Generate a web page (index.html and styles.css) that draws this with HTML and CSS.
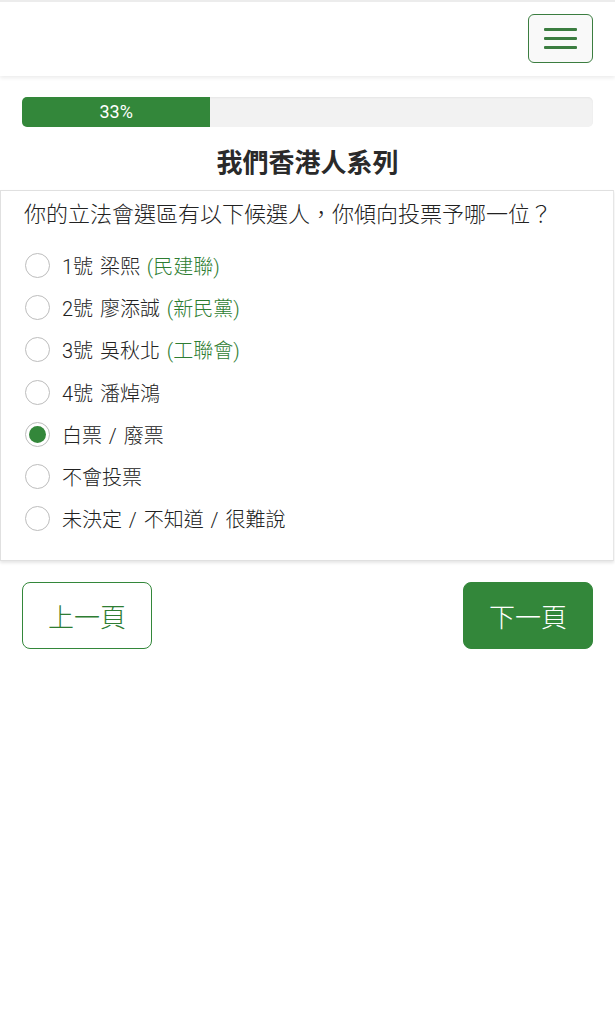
FILE: index.html
```html
<!DOCTYPE html>
<html lang="zh-Hant">
<head>
    <meta charset="UTF-8">
    <meta name="viewport" content="width=device-width, initial-scale=1.0">
    <title>我們香港人系列</title>
    <link rel="stylesheet" href="styles.css">
</head>
<body>
    <nav class="navbar">
        <button class="menu-btn" aria-label="menu">
            <span class="bar"></span>
            <span class="bar"></span>
            <span class="bar"></span>
        </button>
    </nav>

    <div class="container">
        <div class="progress">
            <div class="progress-fill" style="width: 33%">33%</div>
        </div>
        <h1 class="title">我們香港人系列</h1>
    </div>

    <div class="card">
        <div class="question">你的立法會選區有以下候選人，你傾向投票予哪一位？</div>
        <ul class="options">
            <li class="option"><span class="radio"></span>1號 梁熙 <span class="party">(民建聯)</span></li>
            <li class="option"><span class="radio"></span>2號 廖添誠 <span class="party">(新民黨)</span></li>
            <li class="option"><span class="radio"></span>3號 吳秋北 <span class="party">(工聯會)</span></li>
            <li class="option"><span class="radio"></span>4號 潘焯鴻</li>
            <li class="option"><span class="radio checked"></span>白票 / 廢票</li>
            <li class="option"><span class="radio"></span>不會投票</li>
            <li class="option"><span class="radio"></span>未決定 / 不知道 / 很難說</li>
        </ul>
    </div>

    <div class="pager">
        <button class="btn btn-outline">上一頁</button>
        <button class="btn btn-fill">下一頁</button>
    </div>
</body>
</html>
```

FILE: styles.css
```css
body {
    margin: 0;
    font-family: Roboto, "Liberation Sans", "Noto Sans CJK TC", sans-serif;
    font-weight: 300;
    color: #222;
    background-color: #fff;
}

.navbar {
    display: flex;
    justify-content: flex-end;
    border-top: 2px solid #ececec;
    padding: 12px 22px 13px;
    box-shadow: 0 2px 4px rgba(0, 0, 0, 0.08);
}

.menu-btn {
    width: 65px;
    height: 49px;
    display: flex;
    flex-direction: column;
    justify-content: center;
    align-items: center;
    gap: 6px;
    background-color: #f9f9f9;
    border: 1px solid #3b7d40;
    border-radius: 6px;
    padding: 0;
}

.bar {
    display: block;
    width: 33px;
    height: 3px;
    background-color: #3b7d40;
    border-radius: 1px;
}

.container {
    padding: 21px 22px 0;
}

.progress {
    height: 30px;
    background-color: #f2f2f2;
    border-radius: 5px;
    overflow: hidden;
    box-shadow: inset 0 1px 2px rgba(0, 0, 0, 0.05);
}

.progress-fill {
    height: 100%;
    background-color: #33873a;
    color: #fff;
    font-size: 18px;
    font-weight: 400;
    line-height: 30px;
    text-align: center;
}

.title {
    margin: 20px 0 11px;
    font-size: 26px;
    line-height: 32px;
    text-align: center;
    font-weight: bold;
    color: #2a2a2a;
}

.card {
    border: 1px solid #e0e0e0;
    border-right-color: #e6e6e6;
    margin-right: 1px;
    padding: 9px 24px 20px 23px;
    box-shadow: 0 2px 3px rgba(0, 0, 0, 0.1);
}

.question {
    font-size: 22px;
    line-height: 30px;
    color: #222;
}

.options {
    list-style: none;
    margin: 14px 0 0;
    padding: 0 0 0 1px;
}

.option {
    display: flex;
    align-items: center;
    height: 42.3px;
    font-size: 20px;
    word-spacing: 2px;
    color: #222;
    white-space: pre;
}

.radio {
    box-sizing: border-box;
    width: 25px;
    height: 25px;
    border: 1px solid #bdbdbd;
    border-radius: 50%;
    margin-right: 12px;
    background-color: #fff;
    display: flex;
    align-items: center;
    justify-content: center;
}

.radio.checked::after {
    content: "";
    width: 17px;
    height: 17px;
    border-radius: 50%;
    background-color: #33873a;
}

.party {
    color: #2e7d32;
}

.pager {
    display: flex;
    justify-content: space-between;
    padding: 21px 22px;
}

.btn {
    box-sizing: border-box;
    width: 130px;
    height: 67px;
    font-family: Roboto, "Liberation Sans", "Noto Sans CJK TC", sans-serif;
    font-weight: 300;
    font-size: 26px;
    border-radius: 8px;
    border: 1px solid #33873a;
    padding: 0;
}

.btn-outline {
    background-color: #fff;
    color: #2e7d32;
}

.btn-fill {
    background-color: #33873a;
    color: #fff;
}
```
